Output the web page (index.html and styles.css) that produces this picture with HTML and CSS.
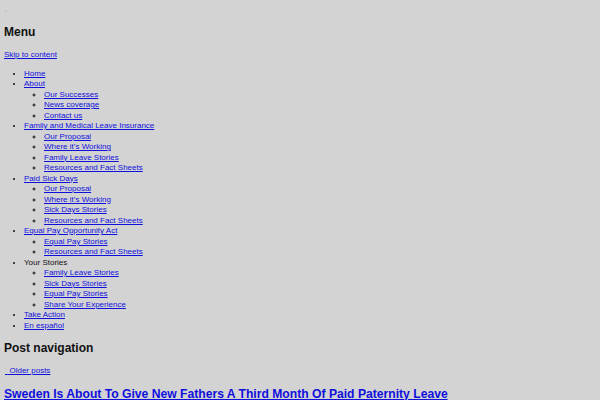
FILE: index.html
```
<!DOCTYPE html>
<html lang="en">
<head>
<meta charset="UTF-8" />
<meta name="viewport" content="width=device-width, initial-scale=1" />
<title>Family Values @ Work</title>
<link rel="stylesheet" href="styles.css">
</head>
<body>
  <span class="pixel"></span>

  <!-- Navegação principal -->
  <nav class="site-nav">
    <h2 class="menu-toggle">Menu</h2>
    <a class="skip-link" href="#content">Skip to content</a>
    <ul class="nav-menu">
      <li><a href="#">Home</a></li>
      <li><a href="#">About</a>
        <ul>
          <li><a href="#">Our Successes</a></li>
          <li><a href="#">News coverage</a></li>
          <li><a href="#">Contact us</a></li>
        </ul>
      </li>
      <li><a href="#">Family and Medical Leave Insurance</a>
        <ul>
          <li><a href="#">Our Proposal</a></li>
          <li><a href="#">Where it’s Working</a></li>
          <li><a href="#">Family Leave Stories</a></li>
          <li><a href="#">Resources and Fact Sheets</a></li>
        </ul>
      </li>
      <li><a href="#">Paid Sick Days</a>
        <ul>
          <li><a href="#">Our Proposal</a></li>
          <li><a href="#">Where it’s Working</a></li>
          <li><a href="#">Sick Days Stories</a></li>
          <li><a href="#">Resources and Fact Sheets</a></li>
        </ul>
      </li>
      <li><a href="#">Equal Pay Opportunity Act</a>
        <ul>
          <li><a href="#">Equal Pay Stories</a></li>
          <li><a href="#">Resources and Fact Sheets</a></li>
        </ul>
      </li>
      <li>Your Stories
        <ul>
          <li><a href="#">Family Leave Stories</a></li>
          <li><a href="#">Sick Days Stories</a></li>
          <li><a href="#">Equal Pay Stories</a></li>
          <li><a href="#">Share Your Experience</a></li>
        </ul>
      </li>
      <li><a href="#">Take Action</a></li>
      <li><a href="#">En español</a></li>
    </ul>
  </nav>

  <!-- Paginação -->
  <nav class="post-nav" id="content">
    <h2 class="post-nav-title">Post navigation</h2>
    <a class="older" href="#"><span class="meta-nav">&nbsp;</span> Older posts</a>
  </nav>

  <article class="post">
    <h1 class="entry-title"><a href="#">Sweden Is About To Give New Fathers A Third Month Of Paid Paternity Leave</a></h1>
  </article>
</body>
</html>
```

FILE: styles.css
```
body {
  font-family: "Liberation Sans", Arial, sans-serif;
  font-size: 8px;
  line-height: 10.5px;
  background-color: #d3d3d3;
  color: #111;
  margin: 0;
  padding: 0 4px;
}
a {
  color: #1010dd;
}
.pixel {
  display: block;
  width: 2px;
  height: 2px;
  margin: 10px 0 0 1px;
  background-color: #c6c6c6;
}
h1, h2 {
  font-weight: bold;
  font-size: 12px;
  line-height: 14px;
  margin: 0;
}
.menu-toggle {
  margin-top: 13px;
}
.skip-link {
  display: inline-block;
  margin-top: 11px;
}
.nav-menu {
  list-style: disc;
  margin: 8px 0 0;
  padding-left: 20px;
}
.nav-menu ul {
  list-style: circle;
  margin: 0;
  padding-left: 20px;
}
.post-nav-title {
  margin-top: 10px;
}
.older {
  display: inline-block;
  margin-top: 11px;
  margin-left: 1px;
}
.entry-title {
  font-size: 12.15px;
  margin-top: 10px;
}
```
